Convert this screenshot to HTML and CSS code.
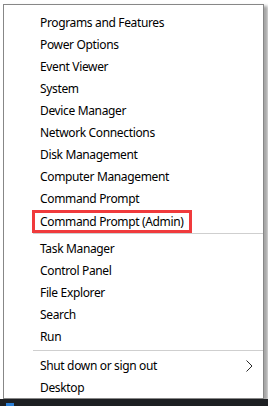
FILE: index.html
```html
<!DOCTYPE html>
<html lang="en">
<head>
  <meta charset="UTF-8" />
  <meta name="viewport" content="width=device-width, initial-scale=1" />
  <title>Quick Link Menu</title>
  <link rel="stylesheet" href="styles.css">
</head>
<body>
  <div class="desk">
    <ul class="menu" aria-label="Quick Link Menu">
      <li class="item">Programs and Features</li>
      <li class="item">Power Options</li>
      <li class="item">Event Viewer</li>
      <li class="item">System</li>
      <li class="item">Device Manager</li>
      <li class="item">Network Connections</li>
      <li class="item">Disk Management</li>
      <li class="item">Computer Management</li>
      <li class="item">Command Prompt</li>
      <li class="item"><span class="mark">Command Prompt (Admin)</span></li>
      <li class="sep"></li>
      <li class="item">Task Manager</li>
      <li class="item">Control Panel</li>
      <li class="item">File Explorer</li>
      <li class="item">Search</li>
      <li class="item">Run</li>
      <li class="sep sep-wide"></li>
      <li class="item item-sub">
        <span>Shut down or sign out</span>
        <svg class="chev" width="7" height="12" viewBox="0 0 7 12" aria-hidden="true">
          <polyline points="0.5,0.5 6,6 0.5,11.5" fill="none" stroke="#2a2a2a" stroke-width="1" />
        </svg>
      </li>
      <li class="item">Desktop</li>
    </ul>
  </div>
  <div class="taskbar">
    <span class="start"></span>
  </div>
</body>
</html>
```

FILE: styles.css
```css
body {
  margin: 0;
  width: 268px;
  height: 406px;
  overflow: hidden;
  background: #ffffff;
  font-family: "Noto Sans", "Open Sans", sans-serif;
  font-size: 12px;
  letter-spacing: -0.35px;
  color: #000;
}
.desk {
  padding: 4px 0 0 3px;
  height: 395px;
}
.menu {
  list-style: none;
  margin: 0;
  padding: 6px 0 0 0;
  width: 261px;
  height: 395px;
  box-sizing: border-box;
  background: #fff;
  border: 1px solid #878787;
  box-shadow: 4px 2px 3px rgba(0, 0, 0, 0.35);
}
.item {
  height: 22px;
  display: flex;
  align-items: center;
  padding: 0 10px 0 36px;
  white-space: nowrap;
}
.item-sub {
  justify-content: space-between;
}
.sep {
  height: 6px;
  box-sizing: border-box;
  padding-top: 2px;
  margin-left: 29px;
}
.sep::before {
  content: "";
  display: block;
  height: 1px;
  background: #cfcfcf;
}
.sep-wide {
  height: 7px;
  padding-top: 3px;
}
.mark {
  display: flex;
  align-items: center;
  height: 23px;
  box-sizing: border-box;
  margin: 2px 0 0 -8px;
  padding: 0 5px;
  border: 3px solid #f03a3c;
}
.chev {
  display: block;
  margin-top: 1px;
}
.taskbar {
  height: 7px;
  background: #1d1f22;
  display: flex;
  align-items: flex-end;
  padding-left: 6px;
}
.start {
  width: 8px;
  height: 3px;
  background: #2b7fd6;
}
```
